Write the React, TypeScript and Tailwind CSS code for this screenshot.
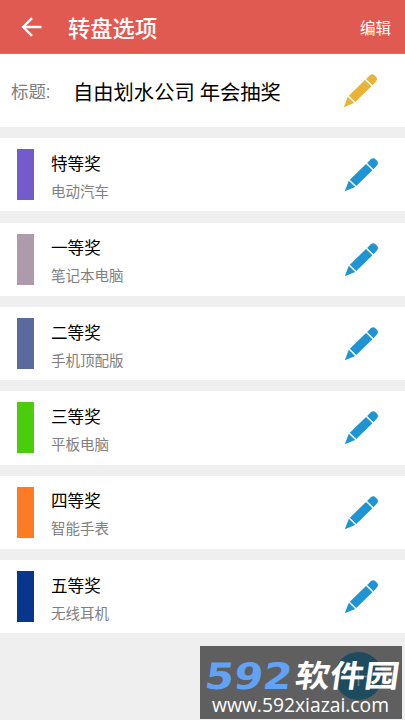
import clsx from "clsx";

const prizes = [
  { level: "特等奖", name: "电动汽车", color: "bg-[#735bcb]" },
  { level: "一等奖", name: "笔记本电脑", color: "bg-[#ad9bab]" },
  { level: "二等奖", name: "手机顶配版", color: "bg-[#5b6a9d]" },
  { level: "三等奖", name: "平板电脑", color: "bg-[#4bcd0b]" },
  { level: "四等奖", name: "智能手表", color: "bg-[#fd7b22]" },
  { level: "五等奖", name: "无线耳机", color: "bg-[#08368c]" },
];

function Pencil({ className }: { className?: string }) {
  return (
    <svg viewBox="0 0 35 35" className={clsx("h-[35px] w-[35px] shrink-0", className)} fill="currentColor">
      <path d="M.8 34.200 4.800 23.800 11.200 30Z" />
      <path d="M5.800 22.700 22 7 28.400 13.300 12.300 29Z" />
      <path d="M23.100 5.900 26.900 2.300Q29.300.100 31.700 2.400L33 3.700Q35 6 32.900 8.400L29.500 12.200Z" />
    </svg>
  );
}

function Watermark() {
  return (
    <svg viewBox="0 0 202 73" className="absolute top-[646px] left-[200px] h-[73px] w-[202px] overflow-visible">
      <rect width="202" height="73" fill="#5f5f5f" />
      <circle cx="158.5" cy="30" r="24" fill="#1f4b5f" />
      <path d="M158.5 20v20M149 30.500h19" stroke="#697f89" strokeWidth="1.500" />
      <text
        transform="translate(3.500 43) skewX(-8)"
        fontFamily="'DejaVu Sans', sans-serif"
        fontWeight="700"
        fontSize="36.500"
        textLength="87"
        lengthAdjust="spacingAndGlyphs"
        fill="#62a2f5"
      >
        592
      </text>
      <text
        transform="translate(94 41) skewX(-8)"
        fontFamily="'Noto Sans CJK SC', sans-serif"
        fontWeight="700"
        fontSize="31"
        textLength="104"
        lengthAdjust="spacingAndGlyphs"
        fill="#fff"
      >
        软件园
      </text>
      <text
        x="12"
        y="65.5"
        fontFamily="'Open Sans', sans-serif"
        fontWeight="500"
        fontSize="20.5"
        textLength="177"
        lengthAdjust="spacingAndGlyphs"
        fill="#fff"
      >
        www.592xiazai.com
      </text>
    </svg>
  );
}

export default function App() {
  return (
    <main className="relative h-[720px] w-full overflow-hidden bg-[#efefef] font-['Roboto','Noto_Sans_CJK_SC',sans-serif]">
      <header className="flex h-[54px] items-center border-b border-[#c57984] bg-[#e15a51] pr-[14px] pl-[21px] text-white">
        <svg viewBox="0 0 22 20" className="h-5 w-[22px]" fill="none" stroke="currentColor" strokeWidth="2.4">
          <path d="M20.500 10H2.500M11 1.200 2.200 10 11 18.800" />
        </svg>
        <h1 className="ml-[25px] pt-[6px] text-[22.3px] leading-none font-medium">转盘选项</h1>
        <button className="ml-auto pt-[7px] text-[15.500px] leading-none font-normal">编辑</button>
      </header>

      <section className="flex h-[73px] items-center bg-white pr-[27px] pl-[11px]">
        <span className="w-[62px] pt-[4px] text-[17.500px] leading-none text-[#808080]">标题:</span>
        <span className="pt-[6px] text-[20.300px] leading-none text-black">自由划水公司 年会抽奖</span>
        <Pencil className="ml-auto text-[#e9b33a]" />
      </section>

      <ul>
        {prizes.map((p) => (
          <li key={p.level} className="mt-[11.200px] flex h-[73.200px] items-center bg-white pr-[26px] pl-[17px]">
            <span className={clsx("h-[51px] w-[17px]", p.color)} />
            <div className="ml-[17px] pt-[7px]">
              <div className="text-[16.600px] leading-[24px] text-black">{p.level}</div>
              <div className="mt-[5px] text-[14.500px] leading-[22px] text-[#808080]">{p.name}</div>
            </div>
            <Pencil className="ml-auto text-[#1e95d2]" />
          </li>
        ))}
      </ul>

      <Watermark />
    </main>
  );
}
